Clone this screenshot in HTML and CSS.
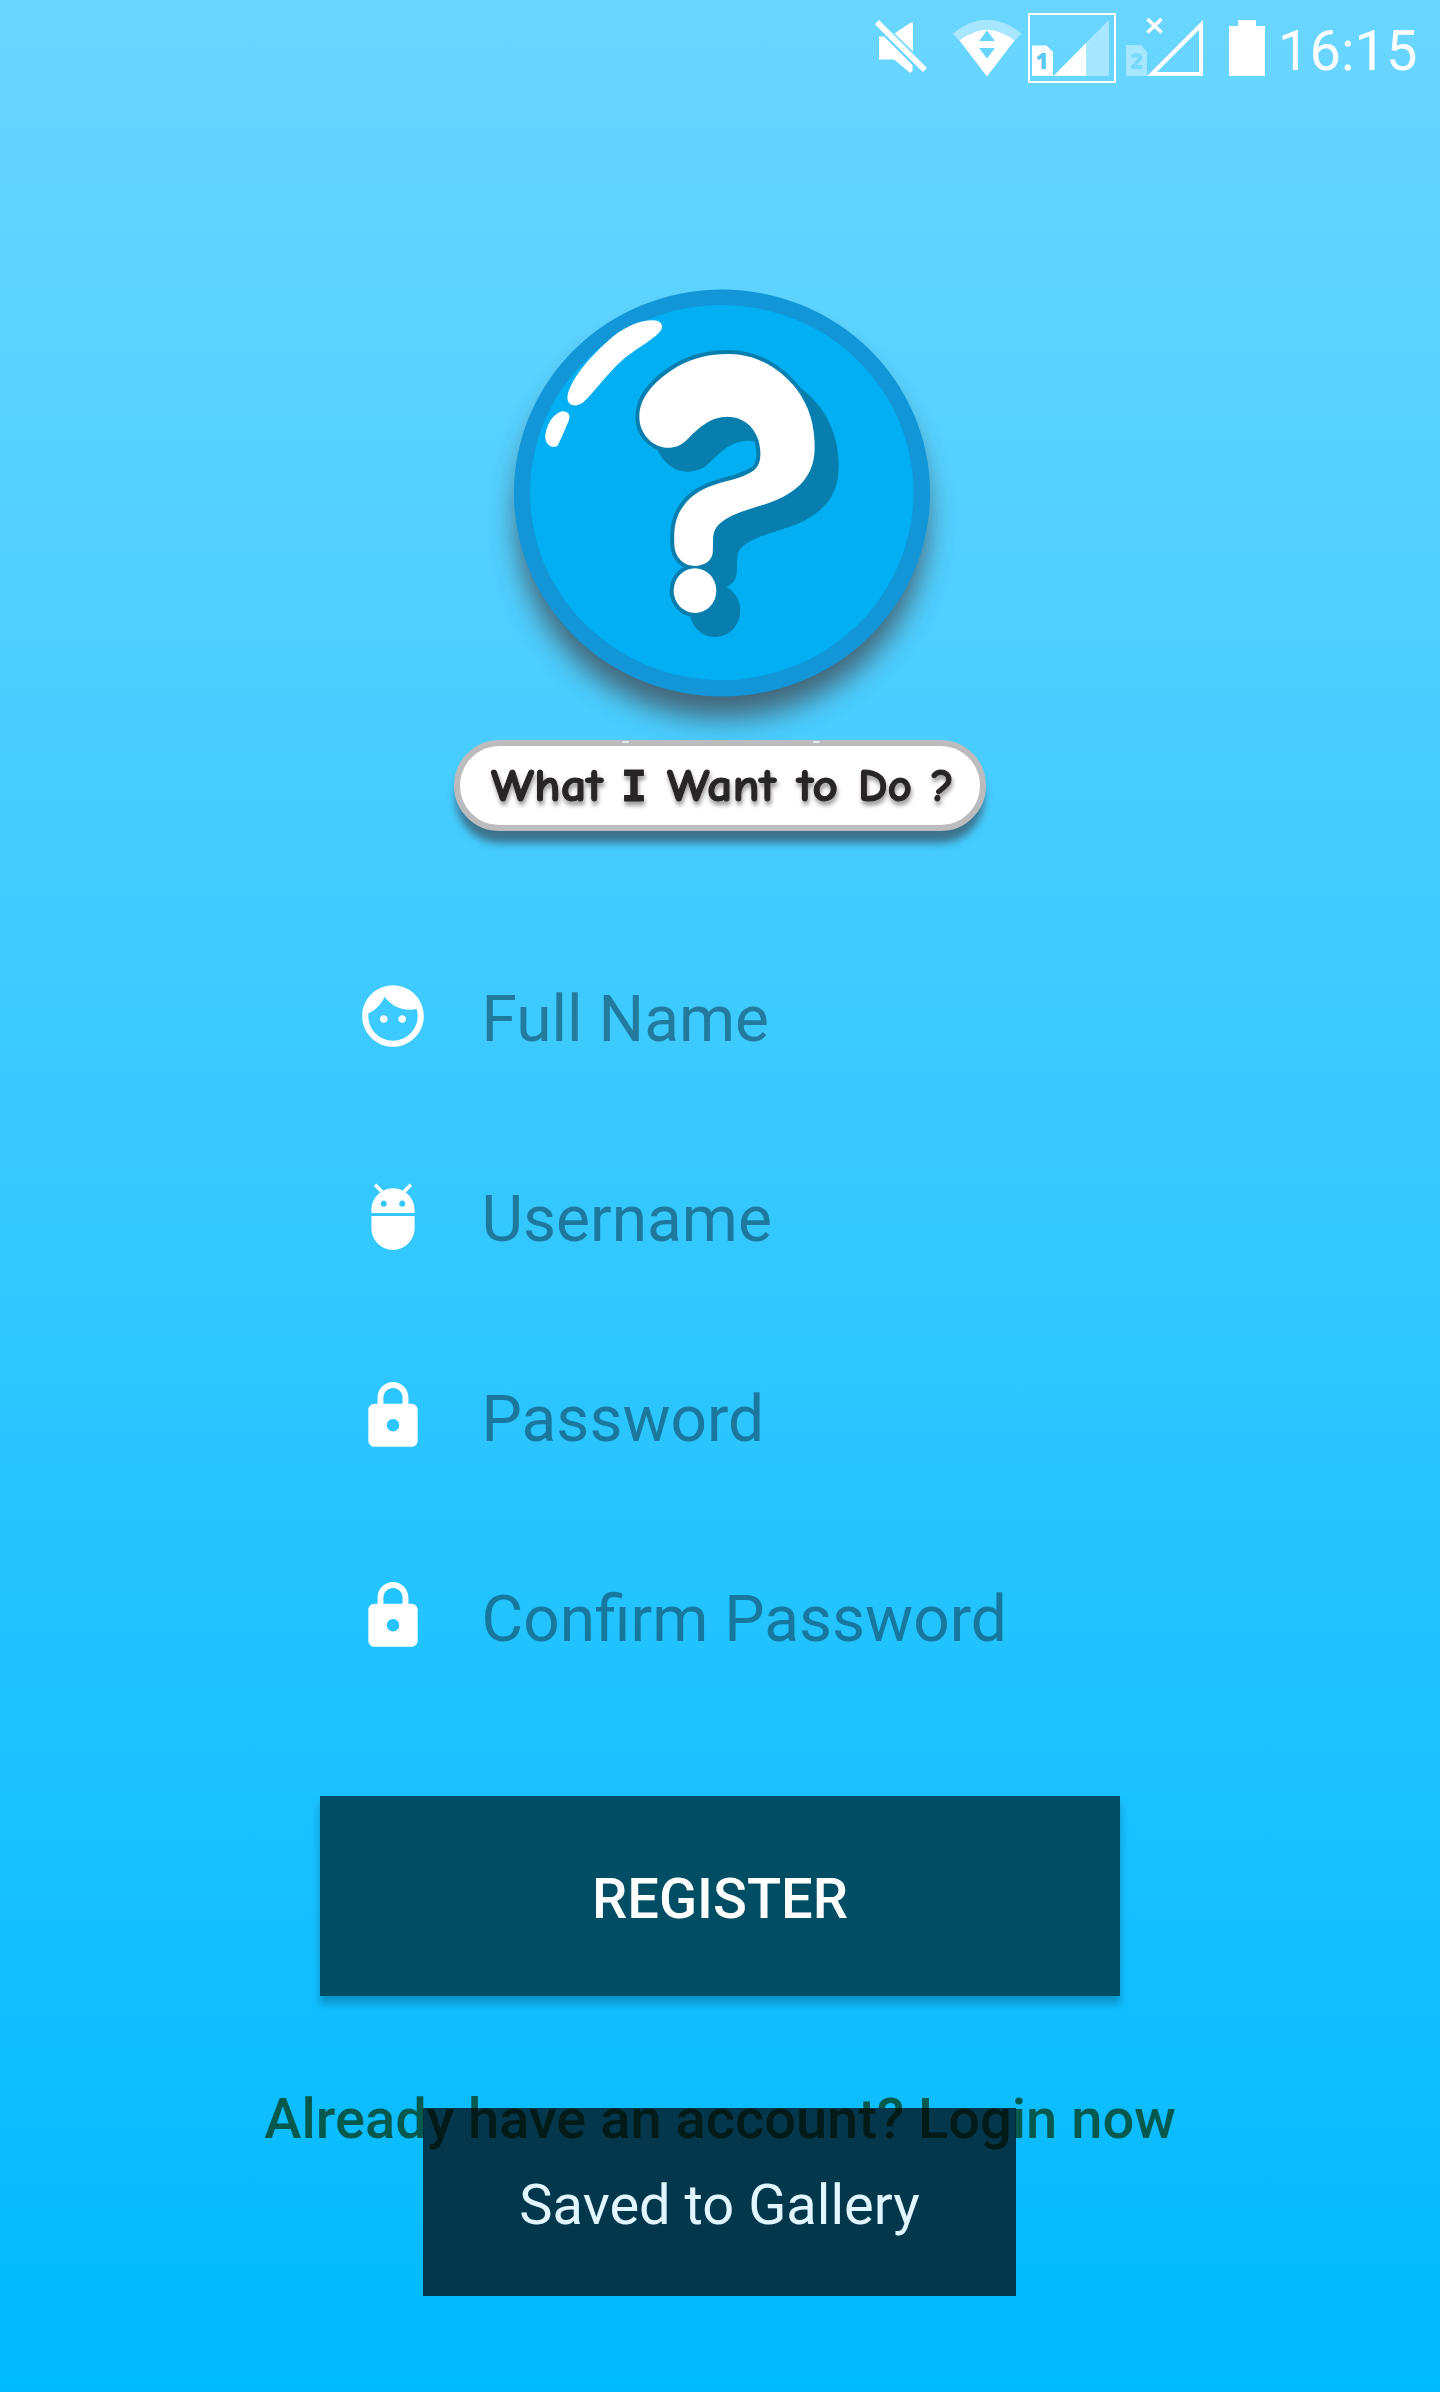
FILE: index.html
```html
<!DOCTYPE html>
<html lang="en">
<head>
<meta charset="utf-8">
<title>Register</title>
<link rel="stylesheet" href="styles.css">
</head>
<body>
<div class="screen">
  <header class="status-bar">
    <svg class="status-icons" viewBox="860 0 410 100" width="410" height="100">
      <g fill="#fff">
        <path d="M879 36.5L884 36.5L912.5 65V71.500L910 72.700L894 59.500H879Z"/>
        <path d="M894.500 33.500L910.500 22.700H913V51.500Z"/>
        <path d="M874.800 24.200L879 20L927 68L922.800 72Z"/>
        <path opacity=".42" d="M952.500 33.500Q987 6 1021.500 33.500L1014.500 41Q987 19 959.500 41Z"/>
        <path fill-rule="evenodd" d="M959.500 40.500Q987 19 1014.500 40.500L987 76.500ZM987 30.500L979 41H995ZM979 48L987 58.500L995 48Z"/>
        <path d="M1032 45.500H1046.500L1053 52V76H1032Z"/>
        <path d="M1053.500 76L1086 43V76Z"/>
        <path opacity=".42" d="M1086 43L1109 20V76H1086Z"/>
        <path opacity=".42" d="M1126 45H1141L1147 52V76H1126Z"/>
        <path fill-rule="evenodd" d="M1147 76L1203 20V76ZM1157 72H1199V30Z"/>
        <path d="M1238 20H1256V26H1265V76H1229V26H1238Z"/>
      </g>
      <rect x="1029" y="14" width="86" height="68" fill="none" stroke="#fff" stroke-width="2"/>
      <path d="M1147.500 19L1161.500 32.500M1161.500 19L1147.500 32.500" fill="none" stroke="#fff" stroke-width="3.600"/>
      <text class="sim sim-one" x="1035.500" y="69">1</text>
      <text class="sim sim-two" x="1130" y="69">2</text>
    </svg>
    <time class="clock">16:15</time>
  </header>

  <svg class="logo" viewBox="440 260 560 600" width="560" height="600" role="img" aria-label="What I Want to Do ?">
    <defs>
      <filter id="soft" x="-20%" y="-20%" width="140%" height="150%"><feGaussianBlur stdDeviation="14"/></filter>
      <filter id="close" x="-20%" y="-40%" width="140%" height="200%"><feGaussianBlur stdDeviation="4"/></filter>
      <path id="hook" d="M448 440C448 375 505 325 560 291C610 262 660 252 715 252C800 252 870 295 920 358C958 410 974 465 974 530C974 600 945 645 880 680C820 712 755 715 700 752C660 780 672 805 668 850C664 875 640 888 615 888C580 888 555 862 553 825C550 765 560 730 590 695C650 630 735 640 790 602C815 585 815 545 805 510C790 465 755 440 712 440C660 440 625 475 590 510C570 530 550 534 530 533C485 530 448 490 448 440Z"/>
      <ellipse id="dot" cx="615" cy="962" rx="64" ry="67"/>
    </defs>
    <ellipse cx="722" cy="519" rx="205" ry="199" fill="#424c54" opacity=".8" filter="url(#soft)"/>
    <ellipse cx="722" cy="493" rx="208" ry="203.500" fill="#1296d8"/>
    <ellipse cx="721.700" cy="492.500" rx="191.700" ry="187.500" fill="#02aff2"/>
    <g transform="translate(490 270) scale(.33333)">
      <path fill="#fff" d="M232 385C235 335 300 258 370 199C410 167 455 150 490 151C510 152 520 163 515 177C500 205 445 230 400 268C350 312 315 365 280 397C260 412 235 410 232 385ZM166 505C166 475 185 430 218 424C235 424 242 435 237 450C225 480 213 505 204 525C197 536 170 533 166 505Z"/>
      <g fill="#087eae" stroke="#087eae" stroke-width="24" stroke-linejoin="round">
        <g transform="translate(60 60)"><use href="#hook"/><use href="#dot"/></g>
        <use href="#hook"/><use href="#dot"/>
      </g>
      <g fill="#fff"><use href="#hook"/><use href="#dot"/></g>
    </g>
    <rect x="456" y="755" width="528" height="88" rx="44" fill="#3a6478" opacity=".85" filter="url(#close)"/>
    <rect x="457" y="743" width="526" height="85" rx="42.500" fill="#fff" stroke="#bcbbbd" stroke-width="6"/>
    <path d="M623 742H628M814 742H819" stroke="#e0ecf2" stroke-width="2" stroke-linecap="round"/>
    <g class="wordmark">
      <text x="491" y="801" textLength="112" lengthAdjust="spacingAndGlyphs">What</text>
      <text class="slab" x="621" y="801" textLength="26" lengthAdjust="spacingAndGlyphs">I</text>
      <text x="667" y="801" textLength="109" lengthAdjust="spacingAndGlyphs">Want</text>
      <text x="797" y="801" textLength="41" lengthAdjust="spacingAndGlyphs">to</text>
      <text x="858" y="801" textLength="54" lengthAdjust="spacingAndGlyphs">Do</text>
      <text x="931" y="801" textLength="23" lengthAdjust="spacingAndGlyphs">?</text>
    </g>
  </svg>

  <main class="form">
    <div class="field">
      <svg class="icon" viewBox="0 0 24 24"><path d="M9 11.750c-.69 0-1.250.56-1.250 1.250s.56 1.250 1.250 1.250 1.250-.56 1.250-1.250-.56-1.250-1.250-1.250zm6 0c-.69 0-1.250.56-1.250 1.250s.56 1.250 1.250 1.250 1.250-.56 1.250-1.250-.56-1.250-1.250-1.250zM12 2C6.480 2 2 6.480 2 12s4.480 10 10 10 10-4.480 10-10S17.520 2 12 2zm0 18c-4.410 0-8-3.590-8-8 0-.29.02-.58.05-.86 2.360-1.050 4.230-2.980 5.210-5.370C11.070 8.330 14.050 10 17.420 10c.78 0 1.530-.09 2.250-.26.21.71.33 1.470.33 2.260 0 4.410-3.590 8-8 8z"/></svg>
      <span class="hint">Full Name</span>
    </div>
    <div class="field">
      <svg class="icon" viewBox="0 0 24 24"><path d="M5 16c0 3.870 3.130 7 7 7s7-3.130 7-7v-4H5v4zM16.120 4.370l2.100-2.100-.82-.83-2.300 2.310C14.160 3.280 13.120 3 12 3s-2.160.28-3.090.75L6.600 1.440l-.82.83 2.100 2.100C6.140 5.640 5 7.680 5 10v1h14v-1c0-2.320-1.140-4.360-2.880-5.630zM9 9c-.55 0-1-.45-1-1s.45-1 1-1 1 .45 1 1-.45 1-1 1zm6 0c-.55 0-1-.45-1-1s.45-1 1-1 1 .45 1 1-.45 1-1 1z"/></svg>
      <span class="hint">Username</span>
    </div>
    <div class="field">
      <svg class="icon" viewBox="0 0 24 24"><path d="M18 8h-1V6c0-2.760-2.240-5-5-5S7 3.240 7 6v2H6c-1.100 0-2 .9-2 2v10c0 1.100.9 2 2 2h12c1.100 0 2-.9 2-2V10c0-1.100-.9-2-2-2zm-6 9c-1.100 0-2-.9-2-2s.9-2 2-2 2 .9 2 2-.9 2-2 2zm3.100-9H8.900V6c0-1.710 1.390-3.100 3.100-3.100 1.710 0 3.100 1.390 3.100 3.100v2z"/></svg>
      <span class="hint">Password</span>
    </div>
    <div class="field">
      <svg class="icon" viewBox="0 0 24 24"><path d="M18 8h-1V6c0-2.760-2.240-5-5-5S7 3.240 7 6v2H6c-1.100 0-2 .9-2 2v10c0 1.100.9 2 2 2h12c1.100 0 2-.9 2-2V10c0-1.100-.9-2-2-2zm-6 9c-1.100 0-2-.9-2-2s.9-2 2-2 2 .9 2 2-.9 2-2 2zm3.100-9H8.900V6c0-1.710 1.390-3.100 3.100-3.100 1.710 0 3.100 1.390 3.100 3.100v2z"/></svg>
      <span class="hint">Confirm Password</span>
    </div>
    <button class="register" type="button">REGISTER</button>
  </main>
  <div class="login">Already have an account? Login now</div>
  <div class="toast">Saved to Gallery</div>
</div>
</body>
</html>
```
FILE: styles.css
```css
* { box-sizing: border-box; }

body {
  margin: 0;
  font-family: Roboto, sans-serif;
}

.screen {
  position: relative;
  display: flex;
  flex-direction: column;
  align-items: center;
  width: 1440px;
  height: 2392px;
  overflow: hidden;
  background: linear-gradient(#6ad6ff, #00baff);
}

.status-bar {
  display: flex;
  justify-content: flex-end;
  width: 100%;
  height: 100px;
  padding-right: 22px;
  color: #fff;
}

.status-icons { flex: none; }

.clock {
  width: 148px;
  padding: 18px 0 0 8px;
  font-size: 56px;
  line-height: 66px;
  white-space: nowrap;
}

.sim {
  font-family: "Open Sans", sans-serif;
  font-size: 22px;
  font-weight: 800;
}

.sim-one { fill: #5cc8f0; }
.sim-two { fill: #78d9ff; }

.logo {
  flex: none;
  margin-top: 160px;
}

.wordmark {
  font-family: "Comic Sans MS", "Comic Neue", Lato, sans-serif;
  font-size: 46px;
  font-weight: 900;
  fill: #292527;
  stroke: #292527;
  stroke-width: 1px;
  stroke-linejoin: round;
  filter: drop-shadow(1px 4px 2px rgba(0, 0, 0, .4));
}

.slab {
  font-family: "DejaVu Sans Mono", monospace;
  font-size: 43px;
}

.form {
  display: flex;
  flex-direction: column;
  width: 800px;
  margin-top: 56px;
}

.field {
  display: flex;
  align-items: center;
  gap: 51.5px;
  height: 200px;
  padding-left: 36px;
}

.icon {
  width: 74px;
  height: 74px;
  fill: #fff;
}

.hint {
  padding-top: 6px;
  font-size: 64px;
  line-height: 75px;
  color: rgba(16, 64, 84, .58);
}

.register {
  height: 200px;
  margin-top: 80px;
  padding: 6px 0 0;
  border: 0;
  background: #004e64;
  box-shadow: 0 8px 8px rgba(0, 60, 90, .32);
  color: #fff;
  font: 500 56px/66px Roboto, sans-serif;
}

.login {
  margin-top: 90px;
  font-size: 56px;
  font-weight: 500;
  line-height: 66px;
  color: #065a4d;
  white-space: nowrap;
}

.toast {
  position: absolute;
  left: 423px;
  top: 2108px;
  width: 593px;
  height: 188px;
  padding-top: 64px;
  background: rgba(1, 0, 3, .71);
  color: #e1f6ff;
  font-size: 56px;
  line-height: 66px;
  text-align: center;
}
```
